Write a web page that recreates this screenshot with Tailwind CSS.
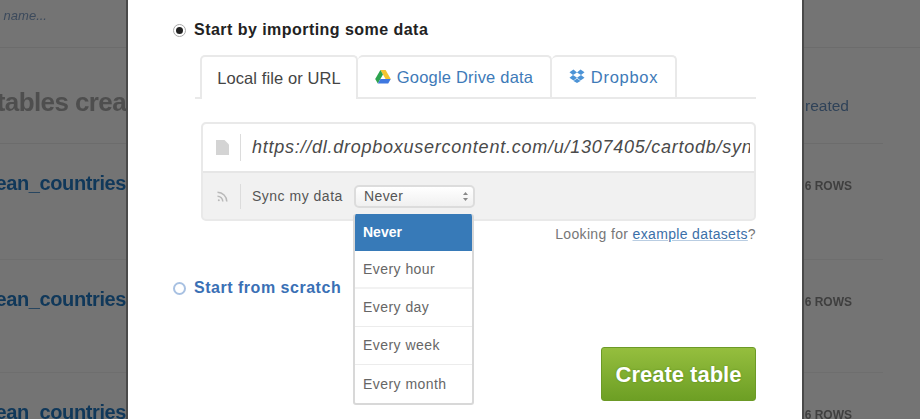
<!DOCTYPE html>
<html>
<head>
<meta charset="utf-8">
<script src="https://cdn.jsdelivr.net/npm/@tailwindcss/browser@4"></script>
</head>
<body class="m-0 overflow-hidden bg-[#747474]">
<div class="flex h-[419px] w-[920px] overflow-hidden blur-[0.4px] font-['Liberation_Sans',Arial,sans-serif]">
  <!-- dimmed page, left -->
  <div class="w-[126px] shrink-0 overflow-hidden text-right whitespace-nowrap">
    <div class="h-[48px] border-b border-[#6c6c6c] pt-[7px] text-left text-[13px] italic leading-[18px] text-[#3c4a5c]">&nbsp;name...</div>
    <div class="flex h-[96px] items-center justify-end border-b border-[#6c6c6c] pt-[14px] text-[26px] font-bold tracking-[-0.6px] text-[#4e4e4e]">tables crea</div>
    <div class="flex h-[78px] items-center justify-end text-[20px] font-bold tracking-[-0.4px] text-[#10385a]">ean_countries</div>
    <div class="h-[38px] border-b border-[#6e6e6e]"></div>
    <div class="flex h-[78px] items-center justify-end text-[20px] font-bold tracking-[-0.4px] text-[#10385a]">ean_countries</div>
    <div class="h-[35px] border-b border-[#6e6e6e]"></div>
    <div class="flex h-[78px] items-center justify-end text-[20px] font-bold tracking-[-0.4px] text-[#10385a]">ean_countries</div>
  </div>

  <!-- modal -->
  <div class="relative h-full w-[678px] shrink-0 border-x-2 border-x-[#4a4a4a] bg-white pl-[45px] pr-[46px]">
    <div class="flex h-[55px] items-center gap-[8px] pt-[5px] text-[16px] font-bold tracking-[0.46px] text-[#222]">
      <span class="flex h-[13px] w-[13px] items-center justify-center rounded-full border border-[#aaa] bg-white">
        <span class="h-[7px] w-[7px] rounded-full bg-[#222]"></span>
      </span>
      <span>Start by importing some data</span>
    </div>

    <div class="ml-[22px]">
      <!-- tabs -->
      <div class="flex h-[44px] items-stretch border-b-2 border-[#e9e9e9] text-[16.500px] text-[#3e7ab8]">
        <div class="ml-[5px] -mb-[2px] flex w-[158px] items-center justify-center rounded-t-[5px] border-2 border-b-0 border-[#e9e9e9] bg-white tracking-[0.1px] text-[#444]">Local file or URL</div>
        <div class="flex w-[194px] items-center justify-center gap-[6px] rounded-t-[5px] border-2 border-b-0 border-l-0 border-[#e9e9e9] tracking-[0.2px]">
          <svg class="h-[14px] w-[16px]" viewBox="0 0 16 14"><path d="M5.400 0h5.200l5.200 9h-5.200z" fill="#f4c431"/><path d="M5.400 0l2.600 4.500L2.800 13.500.2 9z" fill="#2da44e"/><path d="M2.800 13.500l2.600-4.500h10.400l-2.600 4.500z" fill="#3f78e0"/></svg>
          <span>Google Drive data</span>
        </div>
        <div class="flex w-[125px] items-center justify-center gap-[6px] rounded-t-[5px] border-2 border-b-0 border-l-0 border-[#e9e9e9] tracking-[0.7px]">
          <svg class="mb-[3px] h-[14px] w-[16px]" viewBox="0 0 16 14" fill="#4c93d6"><path d="M4.500 0.500 0.500 3.200 4 6 8 3.400z"/><path d="M11.500 0.500 15.500 3.200 12 6 8 3.400z"/><path d="M4 6 .5 8.800 4.500 11.400 8 8.800z"/><path d="M12 6 15.500 8.800 11.500 11.400 8 8.800z"/><path d="M4.500 12 8 9.600 11.500 12 8 14z"/></svg>
          <span>Dropbox</span>
        </div>
      </div>

      <!-- url box -->
      <div class="ml-[6px] mt-[23px] h-[99px] rounded-[5px] border-2 border-[#e9e9e9] bg-[#f1f1f1]">
        <div class="flex h-[49px] items-center overflow-hidden rounded-t-[4px] border-b-2 border-[#e6e6e6] bg-white pr-[4px]">
          <div class="flex h-[27px] w-[38px] shrink-0 items-center justify-center border-r border-[#dcdcdc] pl-[2px]">
            <svg class="h-[15px] w-[13px]" viewBox="0 0 13 15" fill="#d4d4d4"><path d="M0 0h8.500L13 4.500V15H0z"/></svg>
          </div>
          <div class="ml-[11px] overflow-hidden whitespace-nowrap text-[18px] italic tracking-[0.75px] text-[#4a4a4a]">https://dl.dropboxusercontent.com/u/1307405/cartodb/syn</div>
        </div>
        <div class="flex h-[47px] items-center">
          <div class="flex h-[25px] w-[38px] shrink-0 items-center justify-center border-r border-[#dcdcdc] pl-[2px]">
            <svg class="h-[11px] w-[11px]" viewBox="0 0 11 11" fill="none" stroke="#b9b9b9" stroke-width="1.500"><circle cx="1.800" cy="9.200" r="1" fill="#b9b9b9" stroke="none"/><path d="M0.500 5.200a5.300 5.300 0 0 1 5.300 5.300"/><path d="M0.500 1.200a9.300 9.300 0 0 1 9.300 9.300"/></svg>
          </div>
          <span class="ml-[11px] w-[102px] shrink-0 text-[14px] tracking-[0.5px] text-[#555]">Sync my data</span>
          <div class="flex h-[23px] w-[121px] items-center justify-between rounded-[5px] border-2 border-[#dcdcdc] bg-gradient-to-b from-white to-[#f0f0f0] pl-[8px] pr-[5px] text-[14px] tracking-[0.4px] text-[#555]">
            <span>Never</span>
            <svg class="h-[9px] w-[5px]" viewBox="0 0 5 9" fill="#888"><path d="M2.500 0 5 3H0z"/><path d="M2.500 9 0 6h5z"/></svg>
          </div>
        </div>
      </div>

      <div class="mt-[5px] h-[20px] text-right text-[14px] leading-[16px] tracking-[0.35px] text-[#777]">Looking for <span class="text-[#3b6fa8] underline decoration-[#b9cde2]">example datasets</span>?</div>
    </div>

    <div class="mt-[32px] flex h-[20px] items-center gap-[8px] text-[16px] font-bold tracking-[0.52px] text-[#3a70b5]">
      <span class="h-[13px] w-[13px] rounded-full border-2 border-[#a8c1e2] bg-white"></span>
      <span>Start from scratch</span>
    </div>

    <div class="mt-[49px] flex justify-end">
      <div class="flex h-[54px] w-[155px] items-center justify-center rounded-[3px] border border-[#6c9a26] bg-gradient-to-b from-[#95be3e] to-[#6d9f24] text-[22px] font-bold text-white [text-shadow:0_0_2px_#5a8a1a]">Create table</div>
    </div>

    <!-- open dropdown -->
    <div class="absolute left-[225px] top-[214px] w-[121px] overflow-hidden rounded-[3px] border-2 border-t-0 border-[#d8d8d8] bg-white text-[14px] tracking-[0.45px] text-[#666]">
      <div class="flex h-[37px] items-center bg-[#377ab8] pl-[8px] font-bold tracking-normal text-white">Never</div>
      <div class="flex h-[38px] items-center border-b-2 border-[#f2f2f2] pl-[8px]">Every hour</div>
      <div class="flex h-[38px] items-center border-b border-[#ececec] pl-[8px]">Every day</div>
      <div class="flex h-[38px] items-center border-b border-[#ececec] pl-[8px]">Every week</div>
      <div class="flex h-[38px] items-center pl-[8px]">Every month</div>
    </div>
  </div>

  <!-- dimmed page, right -->
  <div class="w-[116px] shrink-0 overflow-hidden whitespace-nowrap">
    <div class="h-[48px] border-b border-[#6c6c6c]"></div>
    <div class="flex h-[96px] w-[79px] items-center border-b border-[#6c6c6c] pt-[20px] text-[15.500px] text-[#2f4258]"><span class="ml-[1px]">reated</span></div>
    <div class="flex h-[78px] w-[48px] items-center justify-end pt-[6px] text-[12px] font-bold text-[#3f3f3f]">6 ROWS</div>
    <div class="h-[38px] w-[79px] border-b border-[#6e6e6e]"></div>
    <div class="flex h-[78px] w-[48px] items-center justify-end pt-[6px] text-[12px] font-bold text-[#3f3f3f]">6 ROWS</div>
    <div class="h-[35px] w-[79px] border-b border-[#6e6e6e]"></div>
    <div class="flex h-[78px] w-[48px] items-center justify-end pt-[6px] text-[12px] font-bold text-[#3f3f3f]">6 ROWS</div>
  </div>
</div>
</body>
</html>
